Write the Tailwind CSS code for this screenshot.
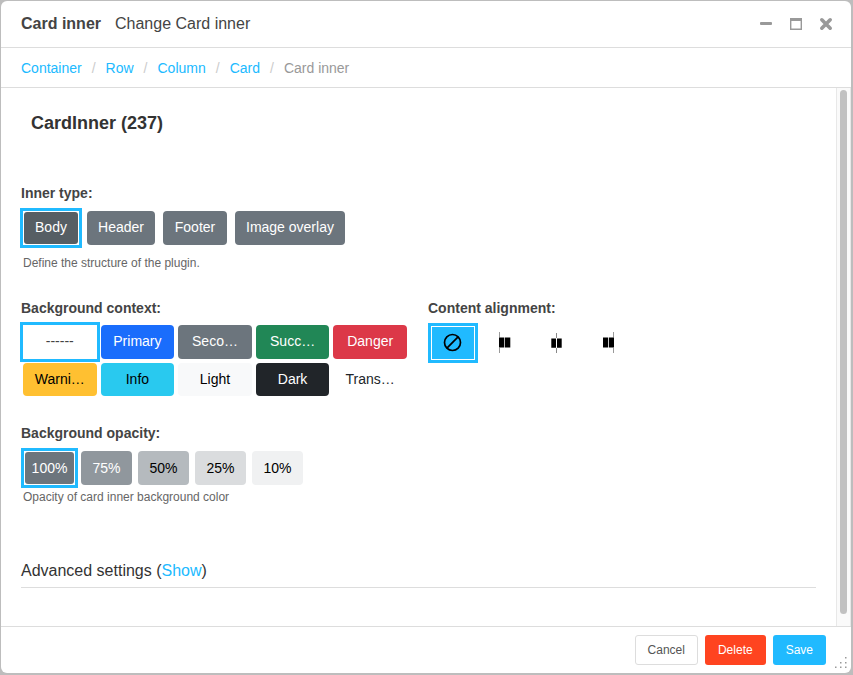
<!DOCTYPE html>
<html lang="en">
<head>
<meta charset="utf-8">
<meta name="viewport" content="width=device-width, initial-scale=1">
<title>Change Card inner</title>
<script src="https://cdn.jsdelivr.net/npm/@tailwindcss/browser@4"></script>
</head>
<body class="bg-[#bdbdbd] font-['Liberation_Sans',Arial,sans-serif] text-sm text-[#444]">
<div class="flex h-screen flex-col pt-px pr-0.5 pb-0.5 pl-px">
  <div role="dialog" aria-labelledby="dialog-title" class="relative flex min-h-0 flex-1 flex-col overflow-hidden rounded-md bg-white">
    <header class="flex h-[47px] shrink-0 items-center justify-between border-b border-[#ddd] pr-4 pl-5">
      <h1 id="dialog-title" class="flex gap-[14px] text-base leading-5"><strong>Card inner</strong><span>Change Card inner</span></h1>
      <div class="flex gap-3">
        <button type="button" aria-label="Minimize" class="size-[18px]">
          <svg viewBox="0 0 18 18" class="size-[18px]" fill="#999"><rect x="3" y="7" width="12" height="3" rx="1"/></svg>
        </button>
        <button type="button" aria-label="Maximize" class="size-[18px]">
          <svg viewBox="0 0 18 18" class="size-[18px]" fill="#999"><path fill-rule="evenodd" d="M3 3h12v12H3zM4.400 6v7.600h9.200V6z"/></svg>
        </button>
        <button type="button" aria-label="Close" class="size-[18px]">
          <svg viewBox="0 0 18 18" class="size-[18px]" fill="none" stroke="#999" stroke-width="3.6" stroke-linecap="round"><path d="M4.8 4.8l8.4 8.4M13.2 4.8l-8.4 8.4"/></svg>
        </button>
      </div>
    </header>

    <nav aria-label="Breadcrumb" class="h-10 shrink-0 border-b border-[#ddd] px-5">
      <ol class="flex h-full items-center gap-[10px] text-[#20baff]">
        <li><a href="#">Container</a></li>
        <li aria-hidden="true" class="text-[#ccc]">/</li>
        <li><a href="#">Row</a></li>
        <li aria-hidden="true" class="text-[#ccc]">/</li>
        <li><a href="#">Column</a></li>
        <li aria-hidden="true" class="text-[#ccc]">/</li>
        <li><a href="#">Card</a></li>
        <li aria-hidden="true" class="text-[#ccc]">/</li>
        <li aria-current="page" class="text-[#999]">Card inner</li>
      </ol>
    </nav>

    <div class="flex min-h-0 flex-1">
      <main class="min-w-0 flex-1 overflow-hidden px-5">
        <h2 class="px-[10px] pt-[23px] text-lg leading-6 font-bold text-[#333]">CardInner (237)</h2>
        <form id="plugin-form" class="pt-12">
          <fieldset>
            <legend class="leading-5 font-bold">Inner type:</legend>
            <div class="flex gap-2 px-0.5 pt-2 text-center leading-8 text-white">
              <label class="relative h-[34px] w-14 p-px outline-3 outline-[#20baff]"><input type="radio" name="type" class="sr-only" checked><span class="block h-8 rounded-[3px] bg-[#565e64] leading-[30px]">Body</span></label>
              <label class="relative h-[34px] w-17 rounded-sm bg-[#6c757d]"><input type="radio" name="type" class="sr-only">Header</label>
              <label class="relative h-[34px] w-16 rounded-sm bg-[#6c757d]"><input type="radio" name="type" class="sr-only">Footer</label>
              <label class="relative h-[34px] rounded-sm bg-[#6c757d] px-[11px]"><input type="radio" name="type" class="sr-only">Image overlay</label>
            </div>
            <p class="px-0.5 pt-[10px] text-xs leading-4 text-[#666]">Define the structure of the plugin.</p>
          </fieldset>

          <div class="flex gap-[21px] pt-[27px]">
            <fieldset class="w-[386px]">
              <legend class="leading-5 font-bold">Background context:</legend>
              <div class="grid grid-cols-5 gap-1 pt-[7px] pl-0.5 text-center leading-[33px]">
                <label class="relative h-[34px] bg-white outline-3 outline-[#20baff]"><input type="radio" name="context" class="sr-only" checked>------</label>
                <label class="relative h-[34px] rounded-sm bg-[#1a6dfc] text-white"><input type="radio" name="context" class="sr-only">Primary</label>
                <label class="relative h-[34px] rounded-sm bg-[#6c757d] text-white"><input type="radio" name="context" class="sr-only" aria-label="Secondary">Seco…</label>
                <label class="relative h-[34px] rounded-sm bg-[#218756] text-white"><input type="radio" name="context" class="sr-only" aria-label="Success">Succ…</label>
                <label class="relative h-[34px] rounded-sm bg-[#dc3848] text-white"><input type="radio" name="context" class="sr-only">Danger</label>
                <label class="relative h-[33px] rounded-sm bg-[#ffc031] text-black"><input type="radio" name="context" class="sr-only" aria-label="Warning">Warni…</label>
                <label class="relative h-[33px] rounded-sm bg-[#29c9ef] text-black"><input type="radio" name="context" class="sr-only">Info</label>
                <label class="relative h-[33px] rounded-sm bg-[#f8f9fa] text-black"><input type="radio" name="context" class="sr-only">Light</label>
                <label class="relative h-[33px] rounded-sm bg-[#212529] text-white"><input type="radio" name="context" class="sr-only">Dark</label>
                <label class="relative h-[33px] rounded-sm text-[#212529]"><input type="radio" name="context" class="sr-only" aria-label="Transparent">Trans…</label>
              </div>
            </fieldset>
            <fieldset>
              <legend class="leading-5 font-bold">Content alignment:</legend>
              <div class="flex gap-2 px-[3px] pt-2">
                <label class="relative flex h-[34px] w-11 items-center justify-center border border-white bg-[#20baff] outline-3 outline-[#20baff]"><input type="radio" name="align" class="sr-only" aria-label="None" checked>
                  <svg viewBox="0 0 20 20" class="size-5" fill="none" stroke="#000" stroke-width="1.7"><circle cx="9.500" cy="9.500" r="8"/><path d="M15.100 3.900L3.900 15.100"/></svg>
                </label>
                <label class="relative flex h-[34px] w-11 items-center justify-center"><input type="radio" name="align" class="sr-only" aria-label="Start">
                  <svg viewBox="0 0 20 22" class="h-[22px] w-5"><path d="M4.500 0v5.500M4.500 16v5" stroke="#999"/><path d="M4 5.600h5.300v10H4zM10 5.600h5.300v10H10z"/></svg>
                </label>
                <label class="relative flex h-[34px] w-11 items-center justify-center"><input type="radio" name="align" class="sr-only" aria-label="Center">
                  <svg viewBox="0 0 20 22" class="h-[22px] w-5"><path d="M9.500 1v5M9.500 16v5" stroke="#888"/><path d="M4.300 6.400H9v9.400H4.300zM10 6.400h4.700v9.400H10z"/></svg>
                </label>
                <label class="relative flex h-[34px] w-11 items-center justify-center"><input type="radio" name="align" class="sr-only" aria-label="End">
                  <svg viewBox="0 0 20 22" class="h-[22px] w-5"><path d="M14.500 0v5.500M14.500 16v5" stroke="#999"/><path d="M4 5.600h5v10H4zM9.800 5.600H15v10H9.800z"/></svg>
                </label>
              </div>
            </fieldset>
          </div>

          <fieldset class="pt-[27px]">
            <legend class="float-left w-full leading-5 font-bold">Background opacity:</legend>
            <div class="clear-both flex gap-1.5 px-[3px] pt-2 text-center leading-[34px]">
              <label class="relative h-[34px] w-[51px] p-px text-white outline-3 outline-[#20baff]"><input type="radio" name="opacity" class="sr-only" checked><span class="block h-8 rounded-[3px] bg-[#6c757d] leading-8">100%</span></label>
              <label class="relative h-[34px] w-[51px] rounded-sm bg-[#90979d] text-white"><input type="radio" name="opacity" class="sr-only">75%</label>
              <label class="relative h-[34px] w-[51px] rounded-sm bg-[#b5babe] text-black"><input type="radio" name="opacity" class="sr-only">50%</label>
              <label class="relative h-[34px] w-[51px] rounded-sm bg-[#dadcde] text-black"><input type="radio" name="opacity" class="sr-only">25%</label>
              <label class="relative h-[34px] w-[51px] rounded-sm bg-[#f0f1f2] text-black"><input type="radio" name="opacity" class="sr-only">10%</label>
            </div>
            <p class="px-0.5 pt-1 text-xs leading-4 text-[#666]">Opacity of card inner background color</p>
          </fieldset>

          <h3 class="mt-[55px] border-b border-[#ddd] pb-[5px] text-base leading-[22px] text-[#333]">Advanced settings (<a href="#" class="text-[#20baff]">Show</a>)</h3>
        </form>
      </main>
      <div aria-hidden="true" class="w-[15px] shrink-0 border-x border-[#e8e8e8] bg-[#fafafa] px-[3px] pt-0.5 pb-3">
        <div class="h-full rounded-full bg-[#c1c1c1]"></div>
      </div>
    </div>

    <footer class="flex h-[47px] shrink-0 items-center justify-end gap-[7px] border-t border-[#ddd] pr-[25px] text-xs text-white">
      <button type="button" class="h-[30px] rounded-[3px] border border-[#ddd] px-3 text-[#555]">Cancel</button>
      <button type="button" class="h-[30px] rounded-[3px] bg-[#ff4420] px-[13px]">Delete</button>
      <button type="submit" form="plugin-form" class="h-[30px] rounded-[3px] bg-[#20baff] px-[13px]">Save</button>
    </footer>
    <svg aria-hidden="true" viewBox="0 0 12 12" class="absolute right-1 bottom-1 size-3" fill="#999"><path d="M10 0h1.500v1.500H10zM5 5h1.500v1.500H5zM10 5h1.500v1.500H10zM0 9.500h1.500V11H0zM5 9.500h1.500V11H5zM10 9.500h1.500V11H10z"/></svg>
  </div>
</div>
</body>
</html>
